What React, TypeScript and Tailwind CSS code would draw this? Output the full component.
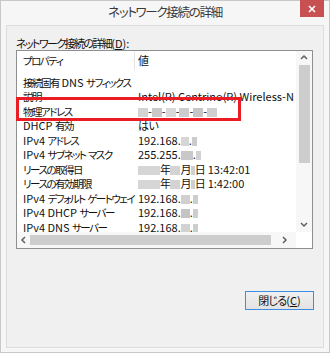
import React from "react";

const CJK = /([\u3000-\u30ff\u4e00-\u9fff]+)/;

const jp = (s: string, cls = "tracking-[-1.5px] text-[10.5px]") =>
  s.split(CJK).map((p, i) =>
    i % 2 === 1 ? (
      <span key={i} className={cls}>
        {p}
      </span>
    ) : (
      <React.Fragment key={i}>{p}</React.Fragment>
    )
  );

const B = ({ w, c = "#cfcfcf" }: { w: number; c?: string }) => (
  <span
    className="inline-block h-[9px] align-[-1px]"
    style={{ width: w, backgroundColor: c }}
  />
);

const J = ({ children }: { children: React.ReactNode }) => (
  <span className="tracking-[-0.6px]">{children}</span>
);

const ip = (a: string, w1: number, c1: string, c2: string) => (
  <>
    {a}
    <B w={w1} c={c1} />.
    <B w={5} c={c2} />
  </>
);

const rows: [string, React.ReactNode][] = [
  ["接続固有 DNS サフィックス", ""],
  ["説明", "Intel(R) Centrino(R) Wireless-N 2230"],
  [
    "物理アドレス",
    <>
      <B w={10} c="#d3d3d3" />-<B w={10} c="#c9c9c9" />-<B w={10} c="#d8d8d8" />-
      <B w={10} c="#cdcdcd" />-<B w={10} c="#c6c6c6" />-<B w={10} c="#d0d0d0" />
    </>,
  ],
  ["DHCP 有効", <J>はい</J>],
  ["IPv4 アドレス", ip("192.168.", 8, "#d6d6d6", "#cccccc")],
  ["IPv4 サブネット マスク", ip("255.255.", 12, "#c8c8c8", "#d2d2d2")],
  [
    "リースの取得日",
    <>
      <B w={22} c="#d6d6d6" />
      <J>年</J>
      <B w={10} c="#d3d3d3" />
      <J>月</J>
      <B w={4} c="#cfcfcf" />
      <J>日</J> 13:42:01
    </>,
  ],
  [
    "リースの有効期限",
    <>
      <B w={22} c="#d6d6d6" />
      <J>年</J>
      <B w={10} c="#d3d3d3" />
      <J>月</J>
      <B w={4} c="#cfcfcf" />
      <J>日</J> 1:42:00
    </>,
  ],
  ["IPv4 デフォルト ゲートウェイ", ip("192.168.", 9, "#d0d0d0", "#cdcdcd")],
  ["IPv4 DHCP サーバー", ip("192.168.", 9, "#c4c4c4", "#cdcdcd")],
  ["IPv4 DNS サーバー", ip("192.168.", 9, "#d2d2d2", "#cdcdcd")],
  ["IPv4 WINS サーバー", ""],
];

const Chev = ({ d }: { d: "up" | "down" | "left" | "right" }) => {
  const paths: Record<string, string> = {
    up: "M1 5 L4 2 L7 5",
    down: "M1 2 L4 5 L7 2",
    left: "M5 1 L2 4 L5 7",
    right: "M3 1 L6 4 L3 7",
  };
  return (
    <svg width="8" height="8" viewBox="0 0 8 8">
      <path d={paths[d]} fill="none" stroke="#606060" strokeWidth="1.5" />
    </svg>
  );
};

export default function App() {
  return (
    <div className="relative w-[330px] h-[353px] bg-[#f6f6f6] border border-[#c8c8c8] flex flex-col font-['Noto_Sans_CJK_JP',sans-serif] [font-feature-settings:'palt'] text-[#111]">
      <div className="relative h-[24px] flex items-center justify-center">
        <span className="text-[12.5px] tracking-[-1.3px] text-[#3a3a3a] leading-none -mt-[1px]">ネットワーク接続の詳細</span>
        <div className="absolute right-[5px] top-[-1px] w-[24px] h-[17px] bg-[#c75050] flex items-center justify-center">
          <svg width="8" height="8" viewBox="0 0 8 8">
            <path d="M1 1 L7 7 M7 1 L1 7" stroke="#fff" strokeWidth="1.6" />
          </svg>
        </div>
      </div>
      <div className="mx-[5px] mb-[4px] flex-1 bg-[#f0f0f0] border border-[#dddddd] flex flex-col">
        <div className="pl-[9px] pt-[10px] h-[24px] text-[11px] leading-[14px] whitespace-nowrap">
          <span className="tracking-[-1.6px]">ネットワーク接続の詳細</span>(<span className="underline">D</span>):
        </div>
        <div className="ml-[9px] w-[297px] h-[199px] border border-[#8e8f8f] bg-white flex flex-col text-[11px]">
          <div className="flex flex-1 min-h-0">
            <div className="flex-1 min-w-0 flex flex-col overflow-hidden">
              <div className="h-[19px] flex items-center shrink-0">
                <div className="w-[118px] h-full pl-[6px] flex items-center border-r border-[#e5e5e5]">{jp("プロパティ")}</div>
                <div className="pl-[3px]">値</div>
              </div>
              <div className="pt-[5px] flex-1 overflow-hidden">
                {rows.map(([k, v], i) => (
                  <div key={i} className="h-[14.5px] flex items-center whitespace-nowrap leading-none">
                    <div className="w-[121px] shrink-0 pl-[6px]">{jp(k)}</div>
                    <div>{v}</div>
                  </div>
                ))}
              </div>
            </div>
            <div className="w-[16px] bg-[#f7f7f7] flex flex-col items-center">
              <div className="h-[14px] flex items-center justify-center">
                <Chev d="up" />
              </div>
              <div className="w-[11px] h-[98px] bg-[#cdcdcd]" />
              <div className="flex-1" />
              <div className="h-[14px] flex items-center justify-center">
                <Chev d="down" />
              </div>
            </div>
          </div>
          <div className="h-[16px] flex">
            <div className="flex-1 bg-[#f7f7f7] flex items-center">
              <div className="w-[12px] flex justify-center ml-[1px]">
                <Chev d="left" />
              </div>
              <div className="w-[241px] h-[10px] bg-[#cdcdcd]" />
              <div className="flex-1 flex justify-center">
                <Chev d="right" />
              </div>
            </div>
            <div className="w-[16px] bg-white" />
          </div>
        </div>
        <div className="flex justify-end pr-[9px] mt-[42px]">
          <div className="w-[69px] h-[19px] border border-[#3d8ee0] bg-gradient-to-b from-[#f0f0f0] to-[#e3e3e3] flex items-center justify-center text-[11px] leading-none">
            <span className="tracking-[-0.8px]">閉じる</span>(<span className="underline">C</span>)
          </div>
        </div>
      </div>
      <div className="absolute left-[15px] top-[96px] w-[225px] h-[24px] border-[3px] border-[#ec1c24]" />
    </div>
  );
}
